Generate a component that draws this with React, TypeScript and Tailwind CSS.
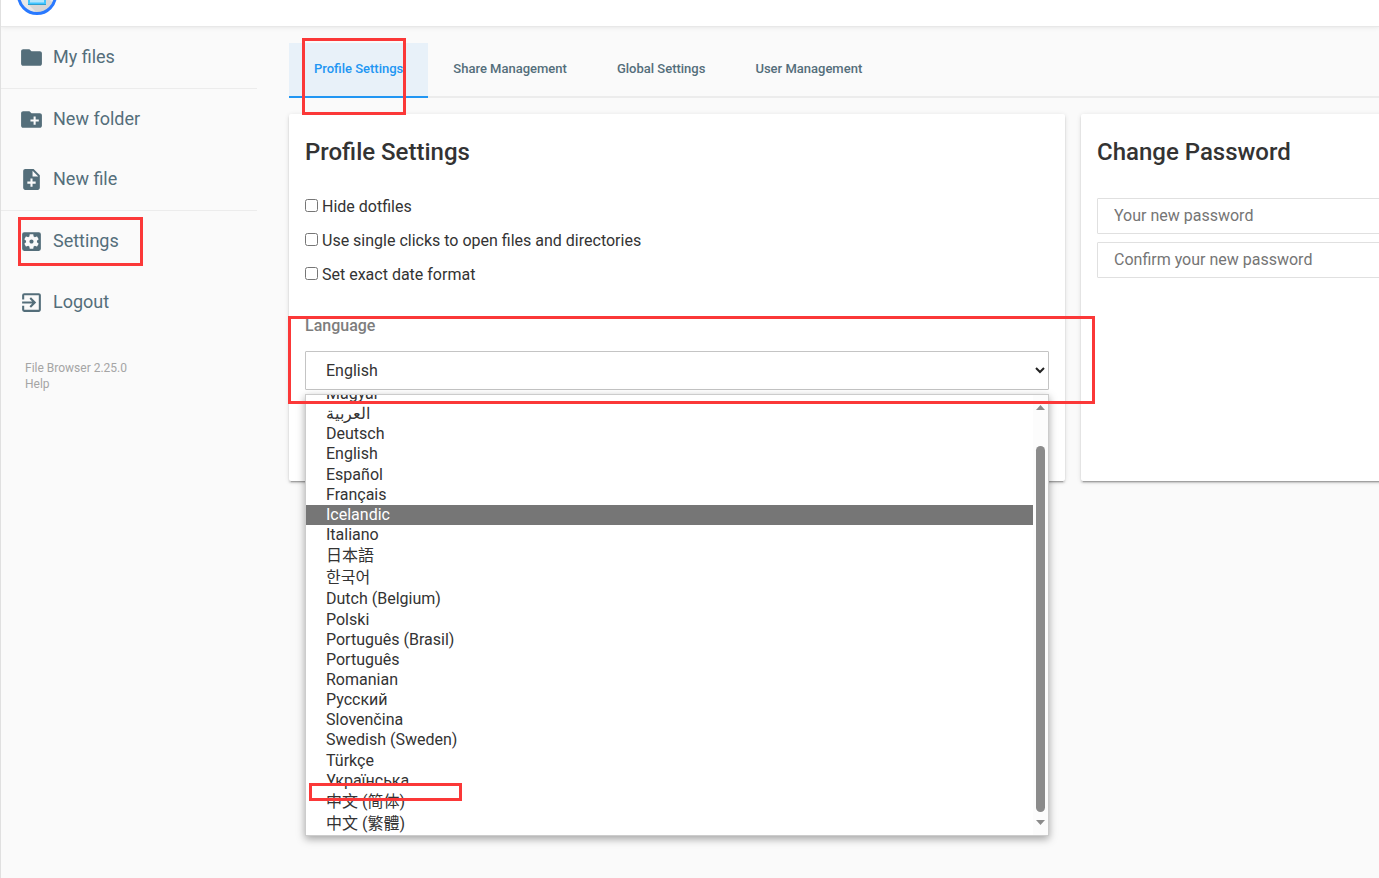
import React, { useState } from "react";
import clsx from "clsx";
import type { IconType } from "react-icons";
import {
  MdCreateNewFolder,
  MdExitToApp,
  MdFolder,
  MdNoteAdd,
  MdSettingsApplications,
} from "react-icons/md";

type Language = { code: string; label: string; cjk?: boolean };

const languages: Language[] = [
  { code: "hu", label: "Magyar" },
  { code: "ar", label: "العربية" },
  { code: "de", label: "Deutsch" },
  { code: "en", label: "English" },
  { code: "es", label: "Español" },
  { code: "fr", label: "Français" },
  { code: "is", label: "Icelandic" },
  { code: "it", label: "Italiano" },
  { code: "ja", label: "日本語", cjk: true },
  { code: "ko", label: "한국어", cjk: true },
  { code: "nl-be", label: "Dutch (Belgium)" },
  { code: "pl", label: "Polski" },
  { code: "pt-br", label: "Português (Brasil)" },
  { code: "pt", label: "Português" },
  { code: "ro", label: "Romanian" },
  { code: "ru", label: "Русский" },
  { code: "sk", label: "Slovenčina" },
  { code: "sv-se", label: "Swedish (Sweden)" },
  { code: "tr", label: "Türkçe" },
  { code: "uk", label: "Українська" },
  { code: "zh-cn", label: "中文 (简体)", cjk: true },
  { code: "zh-tw", label: "中文 (繁體)", cjk: true },
];

const tabs = [
  "Profile Settings",
  "Share Management",
  "Global Settings",
  "User Management",
];

const checks = [
  "Hide dotfiles",
  "Use single clicks to open files and directories",
  "Set exact date format",
];

// red frame drawn over the part of the page it points at
const Marker = ({ className }: { className: string }) => (
  <div
    className={clsx(
      "pointer-events-none absolute z-20 border-3 border-[#fb3838]",
      className
    )}
  />
);

const Logo = () => (
  <svg width="40" height="15" viewBox="0 25 40 15" aria-label="File Browser">
    <circle cx="20" cy="20" r="18.5" fill="#e8e8e8" />
    <path d="M11 29 L20 38 A18 18 0 0 0 36 28 L28 20 Z" fill="#d6d6d6" />
    <circle cx="20" cy="20" r="18.5" fill="none" stroke="#2979ff" strokeWidth="3" />
    <path d="M11 20h18v10H11z" fill="#40c4ff" />
    <path d="M13 20h14v7.500H13z" fill="#b3e5fc" />
    <path d="M11 29h18v1H11z" fill="#2c9fd0" />
  </svg>
);

type SidebarItemProps = {
  icon: IconType;
  label: string;
  children?: React.ReactNode;
};

const SidebarItem = ({ icon: Icon, label, children }: SidebarItemProps) => (
  <div className="relative">
    <button className="flex h-[60px] w-full items-center gap-[9px] pl-[18px] text-left text-lg text-[#546e7a]">
      <Icon size={25} />
      {label}
    </button>
    {children}
  </div>
);

const Sidebar = () => (
  <nav className="w-64 shrink-0">
    <div className="border-b border-[#ececec] pb-px">
      <SidebarItem icon={MdFolder} label="My files" />
    </div>
    <div className="border-b border-[#ececec] pb-px">
      <SidebarItem icon={MdCreateNewFolder} label="New folder" />
      <SidebarItem icon={MdNoteAdd} label="New file" />
    </div>
    <div className="flex flex-col gap-px">
      <SidebarItem icon={MdSettingsApplications} label="Settings">
        <Marker className="top-[6px] left-[17px] h-[49px] w-[125px]" />
      </SidebarItem>
      <SidebarItem icon={MdExitToApp} label="Logout" />
    </div>
    <div className="mt-7 flex flex-col items-start pl-6 text-xs text-[#a5a5a5]">
      <a href="#project">File Browser 2.25.0</a>
      <a href="#help">Help</a>
    </div>
  </nav>
);

const LanguageList = () => {
  const [active, setActive] = useState<string>("is");

  return (
    <div className="absolute top-full left-0 z-10 mt-1 flex h-[442px] w-full border border-[#ccc] bg-white shadow-[0_3px_8px_rgba(0,0,0,0.35)]">
      <div className="flex flex-1 flex-col justify-end overflow-hidden">
        <ul role="listbox" className="flex h-[451px] shrink-0 flex-col">
          {languages.map((language) => (
            <li
              key={language.code}
              role="option"
              aria-selected={language.code === active}
              onMouseEnter={() => setActive(language.code)}
              className={clsx(
                "flex grow items-center pl-5 leading-5",
                language.cjk ? "basis-[22px]" : "basis-5",
                language.code === active && "bg-[#767676] text-white"
              )}
            >
              {language.label}
            </li>
          ))}
        </ul>
      </div>
      <div className="flex w-[15px] flex-col items-center bg-[#fcfcfc] py-[10px]">
        <svg width="9" height="5" viewBox="0 0 9 5" fill="#8b8b8b">
          <path d="M4.500 0L9 5H0z" />
        </svg>
        <div className="mt-9 mb-2 w-[9px] flex-1 rounded-full bg-[#8b8b8b]" />
        <svg width="9" height="5" viewBox="0 0 9 5" fill="#8b8b8b">
          <path d="M0 0h9L4.500 5z" />
        </svg>
      </div>
      <Marker className="bottom-[34px] left-[3px] h-[18px] w-[153px]" />
    </div>
  );
};

const Card = ({ title, children }: { title: string; children: React.ReactNode }) => (
  <section className="rounded-xs bg-white px-4 pt-5 pb-[91px] shadow-[0_2px_2px_rgba(0,0,0,0.14),0_1px_5px_rgba(0,0,0,0.12),0_3px_1px_-2px_rgba(0,0,0,0.2)]">
    <h2 className="text-2xl leading-9 font-medium">{title}</h2>
    {children}
  </section>
);

const ProfileSettings = () => {
  const [language, setLanguage] = useState<string>("en");

  return (
    <Card title="Profile Settings">
      <div className="mt-[26px] flex flex-col gap-3">
        {checks.map((label) => (
          <label key={label} className="flex items-start gap-1 leading-[22px]">
            <input type="checkbox" className="mt-[3px] size-[13px]" />
            {label}
          </label>
        ))}
      </div>
      <div className="relative mt-[30px]">
        <label
          htmlFor="language"
          className="block leading-5 font-medium text-[#7d7d7d]"
        >
          Language
        </label>
        <div className="relative mt-[15px]">
          <select
            id="language"
            value={language}
            onChange={(e) => setLanguage(e.target.value)}
            className="block h-[39px] w-full appearance-none rounded-[1px] border border-[#c4c4c4] bg-white px-5"
          >
            {languages.map(({ code, label }) => (
              <option key={code} value={code}>
                {label}
              </option>
            ))}
          </select>
          <svg
            className="pointer-events-none absolute top-4 right-1"
            width="10"
            height="7"
            viewBox="0 0 10 7"
            fill="none"
            stroke="#222"
            strokeWidth="2"
          >
            <path d="M1 1l4 4 4-4" />
          </svg>
          <LanguageList />
        </div>
        <Marker className="top-0 -right-[46px] -left-[17px] h-[88px]" />
      </div>
    </Card>
  );
};

const passwordClass =
  "block h-9 w-full rounded-[1px] border border-[#e0e0e0] px-4 pb-0.5 placeholder:text-[#757575]";

const ChangePassword = () => (
  <Card title="Change Password">
    <div className="mt-7 flex flex-col gap-2">
      <input
        type="password"
        aria-label="Your new password"
        placeholder="Your new password"
        className={passwordClass}
      />
      <input
        type="password"
        aria-label="Confirm your new password"
        placeholder="Confirm your new password"
        className={passwordClass}
      />
    </div>
  </Card>
);

export default function App() {
  const [tab, setTab] = useState<string>("Profile Settings");

  return (
    <div className="flex min-h-screen flex-col overflow-hidden border-l border-[#e0e0e0] bg-[#fafafa] font-[Roboto,'Noto_Sans_CJK_SC',sans-serif] text-base text-[#333]">
      <header className="h-[27px] border-b border-[#e8e8e8] bg-white pl-4 shadow-[0_0_5px_rgba(0,0,0,0.1)]">
        <Logo />
      </header>
      <div className="flex flex-1">
        <Sidebar />
        <main className="min-w-0 flex-1 pt-4 pl-8">
          <div className="flex border-b-2 border-[#ececec]">
            {tabs.map((name, index) => (
              <div key={name} className="relative -mb-[2px]">
                <button
                  onClick={() => setTab(name)}
                  className={clsx(
                    "h-[55px] border-b-2 px-[25px] pb-0.5 text-[13px] font-medium",
                    name === tab
                      ? "border-[#2196f3] bg-[#e8f1f9] text-[#2196f3]"
                      : "border-transparent text-[#546e7a]"
                  )}
                >
                  {name}
                </button>
                {index === 0 && (
                  <Marker className="-top-[5px] left-[13px] h-[77px] w-[104px]" />
                )}
              </div>
            ))}
          </div>
          <div className="mt-4 grid min-w-[1568px] grid-cols-2 gap-4">
            <ProfileSettings />
            <ChangePassword />
          </div>
        </main>
      </div>
    </div>
  );
}
